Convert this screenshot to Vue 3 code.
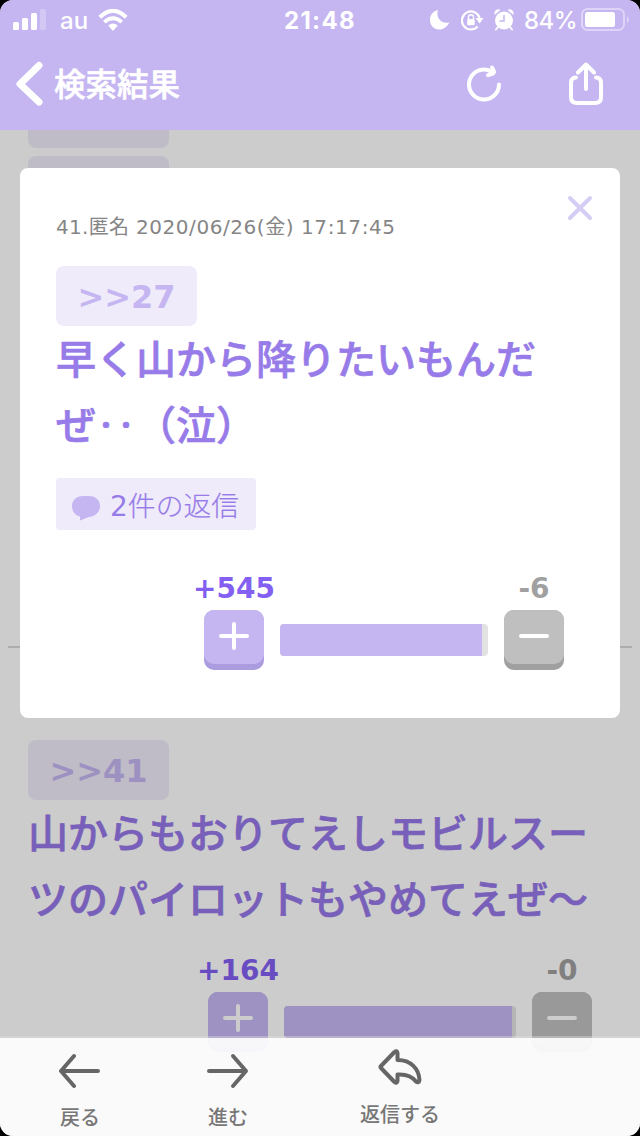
<script setup>
const comment = {
  meta: ['41.匿名', '2020/06/26(金)', '17:17:45'],
  anchor: '>>27',
  lines: ['早く山から降りたいもんだ', 'ぜ‥（泣）'],
}
const next = {
  anchor: '>>41',
  lines: ['山からもおりてえしモビルスー', 'ツのパイロットもやめてえぜ～'],
}
</script>

<template>
  <div class="device">
    <div class="screen">
      <header class="top">
        <div class="status">
          <svg class="signal" width="34" height="22" viewBox="0 0 34 22" fill="#fff">
            <rect x="0" y="13" width="6" height="8" rx="1.6" />
            <rect x="9" y="9" width="6" height="12" rx="1.6" />
            <rect x="18" y="4" width="6" height="17" rx="1.6" />
            <rect x="27" y="0" width="6" height="21" rx="1.6" opacity=".25" />
          </svg>
          <span class="carrier">au</span>
          <svg class="wifi" width="30" height="22" viewBox="0 0 30 22">
            <path d="M1.8 8.2Q15-4.5 28.2 8.2" fill="none" stroke="#fff" stroke-width="4" />
            <path d="M6.3 13.1Q15 5.3 23.7 13.1" fill="none" stroke="#fff" stroke-width="3.8" />
            <path d="M10.2 16.5Q15 12.7 19.8 16.5L15 22Z" fill="#fff" />
          </svg>
          <span class="clock">21:48</span>
          <div class="indicators">
            <svg width="20" height="20" viewBox="0 0 20 20" fill="#fff"><path d="M8 0C5.7 6.5 10 14.3 19.4 12.4C13 23.8-.2 20.4 0 9.5C.2 4.6 3.5 1 8 0Z" /></svg>
            <svg class="lock" width="23" height="22" viewBox="0 0 23 22">
              <path d="M16.6 16.500A9 9 0 1 1 18.600 8" fill="none" stroke="#fff" stroke-width="2.2" />
              <path d="M14.500 8H22.500L18.600 13.600Z" fill="#fff" />
              <rect x="6.200" y="9" width="7.500" height="6.200" rx="1" fill="#fff" />
              <path d="M7.500 9V7Q7.500 4.800 10 4.800T12.500 7V9" fill="none" stroke="#fff" stroke-width="1.4" />
            </svg>
            <svg class="alarm" width="20" height="22" viewBox="0 0 20 22">
              <path d="M.7 5.8A4 4 0 0 1 6.500 1ZM19.3 5.8A4 4 0 0 0 13.500 1Z" fill="#fff" />
              <circle cx="10" cy="11.500" r="9" fill="#fff" />
              <path d="M4 18L2 20.5M16 18l2 2.5" stroke="#fff" stroke-width="2" stroke-linecap="round" />
              <path d="M10 6v6H5.5" fill="none" stroke="#c5b6f1" stroke-width="1.5" />
            </svg>
            <span class="percent">84%</span>
            <svg class="battery" width="49" height="24" viewBox="0 0 49 24">
              <rect x="1" y="1" width="42" height="21" rx="5.5" fill="none" stroke="#fff" stroke-opacity=".42" stroke-width="2" />
              <rect x="4" y="4" width="30" height="15" rx="2.5" fill="#fff" />
              <path d="M46 8q2 1 2 3.500t-2 3.500z" fill="#fff" opacity=".42" />
            </svg>
          </div>
        </div>
        <div class="nav">
          <svg width="28" height="46" viewBox="0 0 28 46"><path d="M23 4.500L4 23L23 41" fill="none" stroke="#fff" stroke-width="7" stroke-linecap="round" stroke-linejoin="round" /></svg>
          <h1>検索結果</h1>
          <svg class="reload" width="36" height="40" viewBox="0 0 36 40" fill="none" stroke="#fff" stroke-width="4" stroke-linecap="round" stroke-linejoin="round">
            <path d="M32 21.500A15 15 0 1 1 24.500 8.500L27 8.500" />
            <path d="M25 4.500Q28 9 26 10.500L21 12.200" />
          </svg>
          <svg class="share" width="36" height="44" viewBox="0 0 36 44" fill="none" stroke="#fff" stroke-width="4" stroke-linecap="round" stroke-linejoin="round">
            <path d="M8 15.500Q3 15.500 3 21V35Q3 41 9 41H27Q33 41 33 35V21Q33 15.500 28 15.500" />
            <path d="M18 27V3M10 10.500L18 2.500L26 10.500" />
          </svg>
        </div>
      </header>

      <main class="feed">
        <div class="stub first"></div>
        <div class="stub"></div>
        <hr />
        <article>
          <div class="anchor">{{ next.anchor }}</div>
          <p class="body"><span v-for="line in next.lines" :key="line">{{ line }}</span></p>
          <div class="votes dim">
            <div class="vote"><b class="plus">+164</b><i class="button up"><svg width="30" height="30" viewBox="0 0 30 30"><path d="M2 15H28M15 3V27" /></svg></i></div>
            <div class="bar"><i></i></div>
            <div class="vote"><b class="minus">-0</b><i class="button down"><svg width="30" height="30" viewBox="0 0 30 30"><path d="M2 15H28" /></svg></i></div>
          </div>
        </article>
      </main>

      <section class="modal">
        <svg class="close" width="26" height="26" viewBox="0 0 26 26"><path d="M3 3L23 23M23 3L3 23" stroke="#d5cdf3" stroke-width="4" stroke-linecap="round" /></svg>
        <div class="meta"><span v-for="part in comment.meta" :key="part">{{ part }}</span></div>
        <div class="anchor">{{ comment.anchor }}</div>
        <p class="body"><span v-for="line in comment.lines" :key="line">{{ line }}</span></p>
        <div class="replies">
          <svg width="28" height="26" viewBox="0 0 28 26"><path d="M11 1H17C24 1 28 5.500 28 11S24 21.500 17 22L8 25.500V21.500C3 20 0 16.500 0 11S4 1 11 1Z" fill="#c5b6f1" /></svg>
          <span><em>2</em>件の返信</span>
        </div>
        <div class="votes">
          <div class="vote"><b class="plus">+545</b><i class="button up"><svg width="30" height="30" viewBox="0 0 30 30"><path d="M2 15H28M15 3V27" /></svg></i></div>
          <div class="bar"><i></i></div>
          <div class="vote"><b class="minus">-6</b><i class="button down"><svg width="30" height="30" viewBox="0 0 30 30"><path d="M2 15H28" /></svg></i></div>
        </div>
      </section>

      <footer class="toolbar">
        <div class="tool">
          <svg width="42" height="36" viewBox="0 0 42 36"><path d="M39 18H2M15 3L2 18L15 33" /></svg>
          <span>戻る</span>
        </div>
        <div class="tool">
          <svg width="42" height="36" viewBox="0 0 42 36"><path d="M2 18H39M26 3L39 18L26 33" /></svg>
          <span>進む</span>
        </div>
        <div class="tool reply">
          <svg width="46" height="38" viewBox="0 0 46 38"><path d="M4 18L17.500 4Q20 2 20.500 5V12C34 12 42 21 42.500 32Q42 35.500 39 33.500C34 27 28 26 20.500 26.500V33Q20 36 17.500 34L4 20Q3 19 4 18Z" /></svg>
          <span>返信する</span>
        </div>
      </footer>
    </div>
  </div>
</template>

<style>
body { margin: 0; background: #000; }
</style>

<style scoped>
* { box-sizing: border-box; }
.device { width: 640px; height: 1136px; background: #000; font-family: "DejaVu Sans", "Noto Sans CJK JP", sans-serif; }
.screen { position: relative; height: 1136px; overflow: hidden; border-radius: 13px; background: #ccc; display: flex; flex-direction: column; }
svg { display: block; flex: none; }
.top { height: 130px; flex: none; background: #c5b6f1; color: #fff; }
.status { height: 40px; display: flex; padding-left: 13px; font-family: Inter, sans-serif; font-size: 24px; line-height: 42px; }
.signal { margin-top: 9px; }
.carrier { width: 28px; margin-left: 13px; font-weight: 500; }
.wifi { margin: 9px 0 0 10px; }
.clock { margin-left: 156px; width: 72px; font-weight: 700; letter-spacing: 1.3px; white-space: nowrap; }
.indicators { display: flex; margin-left: 74px; }
.indicators > svg { margin-top: 10px; }
.lock { margin-left: 11px; }
.indicators > .alarm { margin: 9px 0 0 10px; }
.percent { width: 52px; margin-left: 10px; font-weight: 500; letter-spacing: -.5px; white-space: nowrap; }
.indicators > .battery { margin: 8px 0 0 5px; }
.nav { height: 90px; display: flex; align-items: flex-start; padding: 21px 36px 0 16px; }
h1 { margin: -2px 0 0 10px; width: 130px; font: 500 31.500px/46px "Noto Sans CJK JP", sans-serif; -webkit-text-stroke: .6px; white-space: nowrap; }
.reload { margin: 2px 0 0 283px; }
.share { margin: 1px 0 0 65px; }
.feed { flex: 1; }
.stub { margin-left: 28px; width: 141px; height: 60px; border-radius: 8px; background: #bfbbc7; }
.stub.first { height: 18px; margin-bottom: 8px; border-radius: 0 0 8px 8px; }
hr { margin: 430px 8px 92px; border: 0; height: 2px; background: #adadad; }
article { padding: 0 28px; }
.anchor { width: 141px; height: 60px; border-radius: 8px; background: #efebfa; color: #c5b6f1; font-size: 32px; font-weight: 700; line-height: 62px; text-align: center; white-space: nowrap; }
.body { margin: 0; color: #977be8; font: 500 40px/62px "Noto Sans CJK JP", sans-serif; -webkit-text-stroke: .7px; }
.body span { display: block; height: 66px; white-space: nowrap; }
article .anchor { background: #bfbbc7; color: #9d91c1; }
article .body { color: #785fb9; }
.votes { display: flex; margin-left: 128px; align-items: flex-end; gap: 16px; }
.vote { width: 60px; display: flex; flex-direction: column; align-items: center; }
.vote:first-child { width: 100px; margin: 0 -20px; }
.vote b { height: 44px; line-height: 46px; font-size: 28px; white-space: nowrap; }
.plus { color: #835ff2; }
.minus { color: #a0a0a0; }
.button { width: 60px; height: 60px; border-radius: 10px; display: flex; justify-content: center; padding-top: 11px; }
.button path { fill: none; stroke: #fff; stroke-width: 4; stroke-linecap: round; }
.up { background: #ab9ce0; }
.down { background: #a0a0a0; }
.button { position: relative; z-index: 0; }
.button::before { content: ""; position: absolute; z-index: -1; inset: 0 0 6px; border-radius: 10px; background: #c5b6f1; }
.down::before { background: #bfbfbf; }
.bar { width: 208px; height: 32px; border-radius: 4px; overflow: hidden; margin-bottom: 14px; background: #e2e2e2; }
.bar i { display: block; width: 202px; height: 32px; background: #c5b6f1; }
.votes.dim { margin: 16px 0 0 180px; }
.dim .bar { width: 232px; background: #b5b5b5; }
.dim .bar i { width: 228px; background: #9e92c2; }
.dim .up { background: #897db3; }
.dim .down { background: #808080; }
.dim .up::before { background: #9e92c2; }
.dim .down::before { background: #999; }
.dim .button path { stroke: #ccc; }
.dim .plus { color: #694cc2; }
.dim .minus { color: #808080; }
.modal { position: absolute; z-index: 1; left: 20px; top: 168px; width: 600px; height: 550px; padding: 44px 36px 0; border-radius: 8px; background: #fff; }
.close { position: absolute; right: 27px; top: 27px; }
.meta { height: 30px; margin-bottom: 24px; display: flex; font-size: 20px; line-height: 30px; color: #858585; white-space: nowrap; }
.meta span:nth-child(1) { width: 80px; letter-spacing: .3px; }
.meta span:nth-child(2) { width: 165px; letter-spacing: .55px; }
.meta span:nth-child(3) { letter-spacing: .6px; }
.replies { width: 200px; height: 52px; margin-top: 20px; border-radius: 4px; background: #efebfa; color: #977be8; display: flex; align-items: center; padding-left: 16px; gap: 10px; font: 300 27.800px/52px "Noto Sans CJK JP", sans-serif; -webkit-text-stroke: .2px; white-space: nowrap; }
.replies svg { margin-top: 8px; }
.replies em { font: 400 28px "DejaVu Sans", sans-serif; -webkit-text-stroke: 0; }
.modal .votes { margin: 36px 0 0 148px; }
.toolbar { position: absolute; z-index: 1; left: 0; right: 0; bottom: 0; height: 100px; display: flex; border-top: 2px solid rgba(225, 225, 225, .4); background: rgba(253, 253, 253, .94); background-clip: padding-box; padding-left: 20px; }
.tool { width: 120px; margin-right: 28px; display: flex; flex-direction: column; align-items: center; padding-top: 15px; color: #777; font: 500 20px/30px "Noto Sans CJK JP", sans-serif; }
.tool span { margin-top: 13px; }
.tool path { fill: none; stroke: #666; stroke-width: 4; stroke-linecap: round; stroke-linejoin: round; }
.reply { margin-left: 24px; padding-top: 10px; }
</style>
